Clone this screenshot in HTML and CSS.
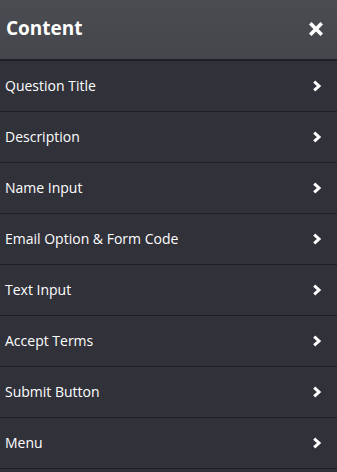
FILE: index.html
```html
<!DOCTYPE html>
<html>
<head>
<meta charset="utf-8">
<link rel="stylesheet" href="styles.css">
</head>
<body>
<div class="panel">
  <div class="header">
    <span class="title">Content</span>
    <svg class="close" width="14" height="14" viewBox="0 0 14 14"><path d="M2.5 2.5 L11.5 11.5 M11.5 2.5 L2.5 11.5" stroke="#fff" stroke-width="3.6" stroke-linecap="square" fill="none"/></svg>
  </div>
  <ul class="list">
    <li class="item"><span>Question Title</span><svg class="chev" width="10" height="12" viewBox="0 0 10 12"><path d="M2.2 1.6 L7 6 L2.2 10.4" stroke="#fff" stroke-width="3" fill="none"/></svg></li>
    <li class="item"><span>Description</span><svg class="chev" width="10" height="12" viewBox="0 0 10 12"><path d="M2.2 1.6 L7 6 L2.2 10.4" stroke="#fff" stroke-width="3" fill="none"/></svg></li>
    <li class="item"><span>Name Input</span><svg class="chev" width="10" height="12" viewBox="0 0 10 12"><path d="M2.2 1.6 L7 6 L2.2 10.4" stroke="#fff" stroke-width="3" fill="none"/></svg></li>
    <li class="item"><span>Email Option &amp; Form Code</span><svg class="chev" width="10" height="12" viewBox="0 0 10 12"><path d="M2.2 1.6 L7 6 L2.2 10.4" stroke="#fff" stroke-width="3" fill="none"/></svg></li>
    <li class="item"><span>Text Input</span><svg class="chev" width="10" height="12" viewBox="0 0 10 12"><path d="M2.2 1.6 L7 6 L2.2 10.4" stroke="#fff" stroke-width="3" fill="none"/></svg></li>
    <li class="item"><span>Accept Terms</span><svg class="chev" width="10" height="12" viewBox="0 0 10 12"><path d="M2.2 1.6 L7 6 L2.2 10.4" stroke="#fff" stroke-width="3" fill="none"/></svg></li>
    <li class="item"><span>Submit Button</span><svg class="chev" width="10" height="12" viewBox="0 0 10 12"><path d="M2.2 1.6 L7 6 L2.2 10.4" stroke="#fff" stroke-width="3" fill="none"/></svg></li>
    <li class="item"><span>Menu</span><svg class="chev" width="10" height="12" viewBox="0 0 10 12"><path d="M2.2 1.6 L7 6 L2.2 10.4" stroke="#fff" stroke-width="3" fill="none"/></svg></li>
  </ul>
</div>
</body>
</html>
```
FILE: styles.css
```css
html, body {
  margin: 0;
  padding: 0;
  background: #31313a;
  height: 100%;
}
body {
  font-family: "Open Sans", "DejaVu Sans", sans-serif;
  color: #fff;
}
.panel {
  width: 337px;
  height: 472px;
  background: #31313a;
  overflow: hidden;
}
.header {
  height: 61px;
  box-sizing: border-box;
  display: flex;
  align-items: center;
  justify-content: space-between;
  padding: 0 14px 3px 6px;
  background: linear-gradient(#4b4c51, #45464b);
  border-bottom: 2px solid #222226;
}
.title {
  font-weight: 700;
  font-size: 19px;
  line-height: 24px;
}
.close {
  display: block;
  margin-top: 1px;
}
.list {
  list-style: none;
  margin: 0;
  padding: 0;
}
.item {
  height: 50px;
  box-sizing: content-box;
  border-bottom: 1px solid #1f1f24;
  display: flex;
  align-items: center;
  justify-content: space-between;
  padding: 0 15px 0 5px;
  font-size: 14px;
}
.item span {
  margin-top: -2px;
}
.chev {
  display: block;
}
```
